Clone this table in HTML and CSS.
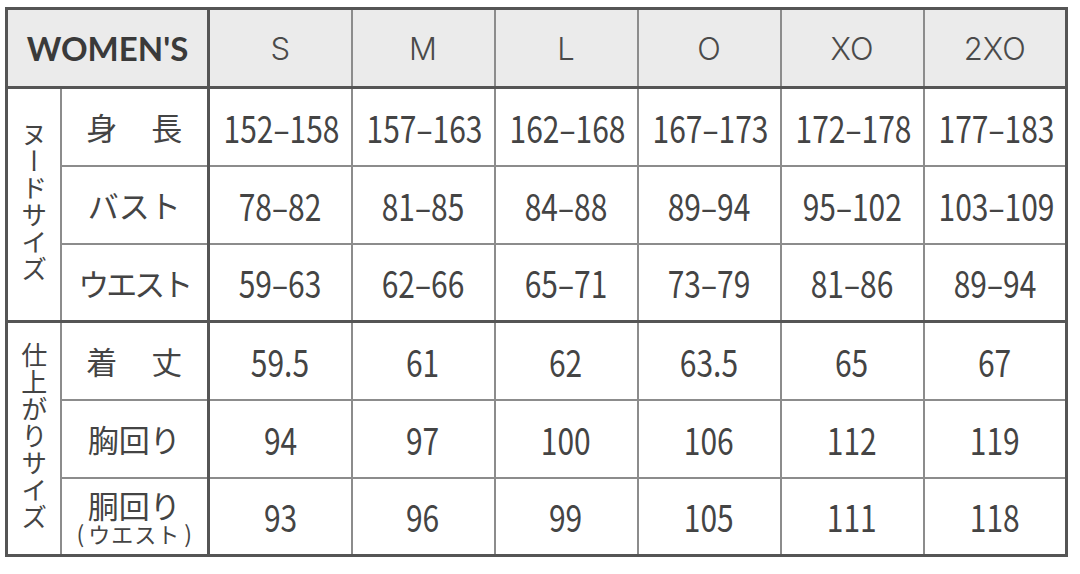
FILE: index.html
```html
<!DOCTYPE html>
<html lang="ja">
<head>
<meta charset="utf-8">
<link rel="stylesheet" href="styles.css">
</head>
<body>
<table class="size-table">
  <colgroup>
    <col class="c-group">
    <col class="c-label">
    <col class="c-size"><col class="c-size"><col class="c-size">
    <col class="c-size"><col class="c-size"><col class="c-size">
  </colgroup>
  <thead>
    <tr class="head">
      <th colspan="2" class="title">WOMEN'S</th>
      <th>S</th><th>M</th><th>L</th><th>O</th><th>XO</th><th>2XO</th>
    </tr>
  </thead>
  <tbody>
    <tr>
      <th rowspan="3" class="group"><span class="vert">ヌードサイズ</span></th>
      <th class="label">身<span class="gap"></span>長</th>
      <td><span class="num">152–158</span></td><td><span class="num">157–163</span></td><td><span class="num">162–168</span></td><td><span class="num">167–173</span></td><td><span class="num">172–178</span></td><td><span class="num">177–183</span></td>
    </tr>
    <tr>
      <th class="label">バスト</th>
      <td><span class="num">78–82</span></td><td><span class="num">81–85</span></td><td><span class="num">84–88</span></td><td><span class="num">89–94</span></td><td><span class="num">95–102</span></td><td><span class="num">103–109</span></td>
    </tr>
    <tr>
      <th class="label tight">ウエスト</th>
      <td><span class="num">59–63</span></td><td><span class="num">62–66</span></td><td><span class="num">65–71</span></td><td><span class="num">73–79</span></td><td><span class="num">81–86</span></td><td><span class="num">89–94</span></td>
    </tr>
    <tr class="sep">
      <th rowspan="3" class="group"><span class="vert">仕上がりサイズ</span></th>
      <th class="label">着<span class="gap"></span>丈</th>
      <td><span class="num">59.5</span></td><td><span class="num">61</span></td><td><span class="num">62</span></td><td><span class="num">63.5</span></td><td><span class="num">65</span></td><td><span class="num">67</span></td>
    </tr>
    <tr>
      <th class="label">胸回り</th>
      <td><span class="num">94</span></td><td><span class="num">97</span></td><td><span class="num">100</span></td><td><span class="num">106</span></td><td><span class="num">112</span></td><td><span class="num">119</span></td>
    </tr>
    <tr>
      <th class="label two"><span class="main">胴回り</span><span class="sub">(<span class="sub-in">ウエスト</span>)</span></th>
      <td><span class="num">93</span></td><td><span class="num">96</span></td><td><span class="num">99</span></td><td><span class="num">105</span></td><td><span class="num">111</span></td><td><span class="num">118</span></td>
    </tr>
  </tbody>
</table>
</body>
</html>
```

FILE: styles.css
```css
html, body {
  margin: 0;
  padding: 0;
  background: #ffffff;
}

body {
  padding: 7px 0 0 5px;
  font-family: "Noto Sans CJK JP", "Noto Sans", sans-serif;
  color: #444444;
}

.size-table {
  border-collapse: collapse;
  table-layout: fixed;
  width: 1062px;
  border: 3px solid #555555;
}

.c-group { width: 54px; }
.c-label { width: 148px; }
.c-size { width: 143px; }

.size-table th,
.size-table td {
  border: 2px solid #8c8c8c;
  padding: 0;
  text-align: center;
  vertical-align: middle;
  font-weight: 400;
}

.head th {
  height: 76px;
  background: #ebebeb;
  border-bottom: 3px solid #555555;
  font-family: "Inter", "Noto Sans", sans-serif;
  font-weight: 300;
  font-size: 31px;
  color: #4a4a4a;
}

.head .title {
  border-right: 3px solid #555555;
  font-family: "Lato", "Noto Sans", sans-serif;
  font-weight: 700;
  font-size: 33px;
  color: #3a3a3a;
}

tbody tr {
  height: 78px;
}

tbody td {
  font-size: 37px;
  color: #444444;
}

.num {
  display: inline-block;
  transform: scaleX(0.81);
  transform-origin: center;
  line-height: 1;
  white-space: nowrap;
}

tbody .label {
  border-right: 3px solid #555555;
  font-size: 31px;
  color: #444444;
}

tbody .tight {
  letter-spacing: -3px;
}

.gap {
  display: inline-block;
  width: 34px;
}

.group {
  border-right: 2px solid #8c8c8c;
}

.vert {
  writing-mode: vertical-rl;
  text-orientation: upright;
  font-size: 26px;
  line-height: 1;
  letter-spacing: 1px;
  color: #444444;
  display: inline-block;
}

.sep th,
.sep td {
  border-top: 3px solid #555555;
}

.two .main {
  display: block;
  font-size: 31px;
  line-height: 33px;
}

.two .sub {
  display: block;
  font-size: 23px;
  line-height: 24px;
}

.sub-in {
  margin: 0 4px;
  font-size: 22px;
  letter-spacing: 1px;
}
```
